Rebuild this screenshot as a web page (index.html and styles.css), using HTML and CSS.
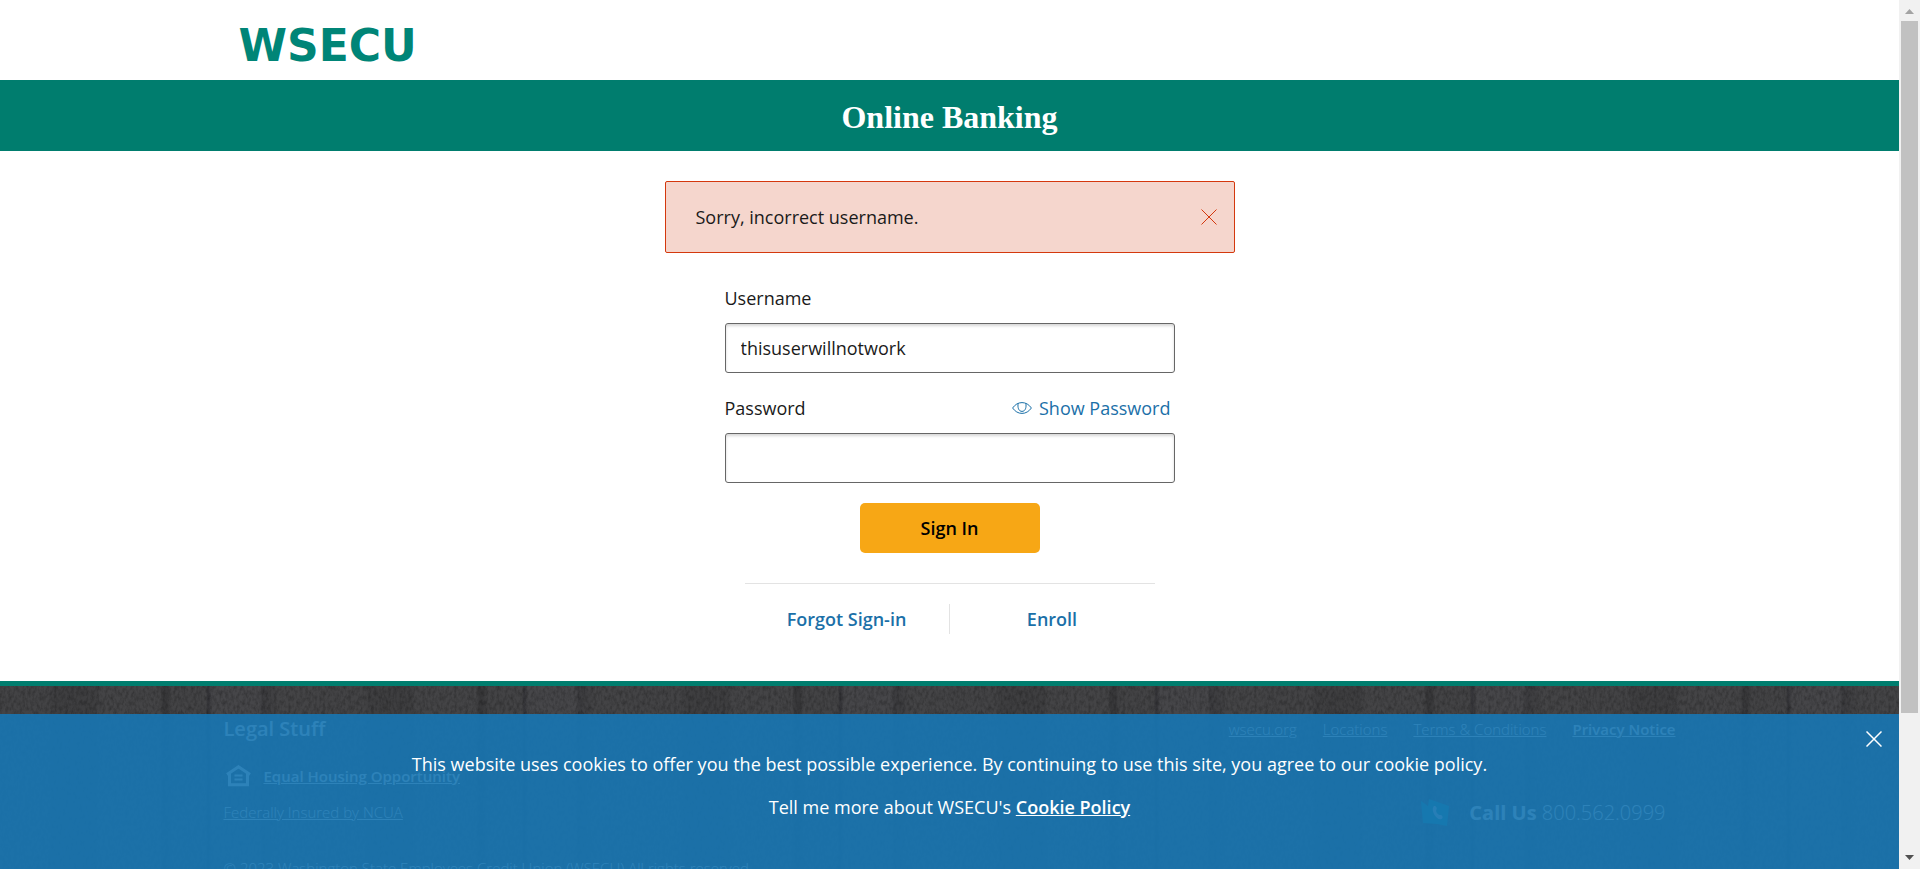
FILE: index.html
```html
<!DOCTYPE html>
<html lang="en">
<head>
<meta charset="utf-8">
<title>Online Banking</title>
<link rel="stylesheet" href="styles.css">
</head>
<body>
<div class="frame">
  <div class="page">
    <header class="site-header"><a class="logo" href="#">WSECU</a></header>
    <div class="banner"><h1>Online Banking</h1></div>
    <main class="content">
      <div class="alert" role="alert">
        <p>Sorry, incorrect username.</p>
        <button class="alert-close" type="button" aria-label="Dismiss"><svg width="16" height="16" viewBox="0 0 16 16"><path d="M.5.5l15 15M15.5.5l-15 15"/></svg></button>
      </div>
      <form class="login">
        <div class="field">
          <label for="username">Username</label>
          <input id="username" type="text" value="thisuserwillnotwork">
        </div>
        <div class="field">
          <div class="label-row">
            <label for="password">Password</label>
            <button class="show-password" type="button"><svg width="20" height="12" viewBox="0 0 20 12"><path d="M.6 6C3 2.600 6.200.6 10 .6S17 2.600 19.400 6C17 9.400 13.800 11.400 10 11.400S3 9.400.6 6z"/><path d="M6.200 1.400C5.400 5 6.500 9.400 10 9.400s4.600-4.400 3.800-8"/></svg>Show Password</button>
          </div>
          <input id="password" type="password">
        </div>
        <button class="submit" type="submit">Sign In</button>
        <nav class="form-links">
          <a href="#">Forgot Sign-in</a>
          <a href="#">Enroll</a>
        </nav>
      </form>
    </main>
    <footer class="site-footer">
      <div class="footer-inner">
        <section class="legal">
          <h2>Legal Stuff</h2>
          <p class="housing"><svg width="25" height="22" viewBox="0 0 25 22"><path d="M1 9.500L12.500 1.800 24 9.500M3.500 8.500v11.200h18V8.500" fill="none" stroke="#fff" stroke-width="3"/><path d="M8.500 10.500h8M8.500 14.500h8" stroke="#fff" stroke-width="2"/></svg><a href="#">Equal Housing Opportunity</a></p>
          <p><a href="#">Federally Insured by NCUA</a></p>
          <p class="copyright">© 2023 Washington State Employees Credit Union (WSECU) All rights reserved.</p>
        </section>
        <section class="contact">
          <nav class="footer-links">
            <a href="#">wsecu.org</a>
            <a href="#">Locations</a>
            <a href="#">Terms &amp; Conditions</a>
            <a class="strong" href="#">Privacy Notice</a>
          </nav>
          <p class="call"><svg width="28" height="28" viewBox="0 0 28 28"><path d="M0 2l7 5 1-7 20 7-2 20-10-2-14-1z" fill="#008f90"/><path d="M12.500 7.500c2-1.500 4 1.500 3 3-1.200 1.500.8 5 3.500 5.500 2-.5 4 2.500 1.500 4-4.500 2-11-8-8-12.500z" fill="#bcd"/></svg><span><strong>Call Us</strong> 800.562.0999</span></p>
        </section>
      </div>
    </footer>
  </div>
  <div class="cookie-bar" role="region" aria-label="Cookie notice">
    <p>This website uses cookies to offer you the best possible experience. By continuing to use this site, you agree to our cookie policy.</p>
    <p>Tell me more about WSECU's <a href="#">Cookie Policy</a></p>
    <button class="cookie-close" type="button" aria-label="Close"><svg width="16" height="16" viewBox="0 0 16 16"><path d="M.5.5l15 15M15.500.5l-15 15"/></svg></button>
  </div>
  <div class="scrollbar" aria-hidden="true">
    <svg width="9" height="5" viewBox="0 0 9 5"><path d="M0 5L4.500 0 9 5z" fill="#a3a3a3"/></svg>
    <div class="track"><div class="thumb"></div></div>
    <svg width="9" height="5" viewBox="0 0 9 5"><path d="M0 0h9L4.500 5z" fill="#505050"/></svg>
  </div>
</div>
</body>
</html>
```
FILE: styles.css
```css
* { box-sizing: border-box; }

body {
  margin: 0;
  background: #fff;
  color: #1a1a1a;
  font: 18px/24px "Open Sans", sans-serif;
}

h1, h2, p { margin: 0; }

button {
  padding: 0;
  border: 0;
  background: none;
  font: inherit;
  cursor: pointer;
}

.frame {
  position: relative;
  display: grid;
  grid-template-columns: minmax(0, 1fr) 21px;
  height: 100vh;
}

.page {
  overflow-y: auto;
  scrollbar-width: none;
}

.site-header {
  display: flex;
  align-items: center;
  max-width: 1452px;
  height: 80px;
  margin: 0 auto;
  padding: 12px 15px 0;
}

.logo {
  color: #008577;
  font: bold 44px/48px "DejaVu Sans", sans-serif;
  text-decoration: none;
}

.banner {
  padding: 17px 0 14px;
  background: #007d6e;
  color: #fff;
  text-align: center;
}

.banner h1 { font: bold 32px/40px "Liberation Serif", serif; }

.content {
  display: flex;
  flex-direction: column;
  align-items: center;
  padding: 30px 0 47px;
}

.alert {
  display: flex;
  align-items: center;
  justify-content: space-between;
  width: 570px;
  max-width: 100%;
  padding: 23px 17px 23px 30px;
  border: 1px solid #d4380d;
  border-radius: 2px;
  background: #f5d6cd;
}

.alert-close { display: flex; }

.alert-close svg,
.show-password svg {
  fill: none;
  stroke: #d4380d;
}

.login {
  display: flex;
  flex-direction: column;
  align-items: center;
  width: 450px;
  max-width: 100%;
  margin-top: 33px;
}

.field {
  display: flex;
  flex-direction: column;
  gap: 13px;
  width: 100%;
  margin-bottom: 23px;
}

.field + .field { margin-bottom: 20px; }

.label-row {
  display: flex;
  justify-content: space-between;
  padding-right: 4px;
}

.show-password {
  display: flex;
  align-items: center;
  gap: 7px;
  color: #1b70a8;
}

.show-password svg { stroke: #1b70a8; }

.field input {
  width: 100%;
  height: 50px;
  padding: 0 15px;
  border: 1px solid #666;
  border-radius: 3px;
  background: #fff;
  box-shadow: inset 0 2px 3px rgba(0, 0, 0, .16);
  color: inherit;
  font: inherit;
}

.submit {
  width: 180px;
  height: 50px;
  border-radius: 5px;
  background: #f7a715;
  color: #000;
  font-weight: 600;
}

.form-links {
  display: grid;
  grid-template-columns: 1fr 1fr;
  width: 410px;
  max-width: 100%;
  margin-top: 30px;
  padding-top: 20px;
  border-top: 1px solid #e3e3e3;
}

.form-links a {
  color: #1b70a8;
  font-weight: 600;
  line-height: 30px;
  text-align: center;
  text-decoration: none;
}

.form-links a:first-child { border-right: 1px solid #e3e3e3; }

.site-footer {
  border-top: 5px solid #007d6e;
  background:
    url("data:image/svg+xml,%3Csvg xmlns='http://www.w3.org/2000/svg' width='400' height='200'%3E%3Cfilter id='n' x='0' y='0' width='100%25' height='100%25'%3E%3CfeTurbulence type='fractalNoise' baseFrequency='.35 .2' numOctaves='3' stitchTiles='stitch'/%3E%3CfeColorMatrix values='0 0 0 0 0 0 0 0 0 0 0 0 0 0 0 .5 0 0 0 -.18'/%3E%3C/filter%3E%3Crect width='400' height='200' filter='url(%23n)'/%3E%3C/svg%3E"),
    repeating-linear-gradient(90deg, #434345 0 48px, #3e3e40 52px 96px, #444446 100px 160px, #38383a 163px 167px, #434345 172px 206px, #323236 208px, #464649 212px 260px, #3b3b3e 262px, #444446 280px 316px);
  color: #fff;
  font-size: 15px;
  font-weight: 300;
}

.footer-inner {
  display: flex;
  justify-content: space-between;
  max-width: 1452px;
  margin: 0 auto;
  padding: 31px 0 80px;
}

.site-footer a { color: #fff; }

.legal h2 {
  font-size: 20px;
  font-weight: 600;
  line-height: 24px;
}

.housing {
  display: flex;
  align-items: center;
  gap: 13px;
  margin: 23px 0 12px;
  padding-left: 2px;
  font-weight: 600;
}

.copyright { margin-top: 32px; }

.contact {
  display: flex;
  flex-direction: column;
  gap: 58px;
}

.footer-links {
  display: flex;
  gap: 26px;
}

.footer-links .strong { font-weight: 600; }

.call {
  display: flex;
  align-items: center;
  align-self: flex-end;
  gap: 20px;
  padding-right: 10px;
  font-size: 20px;
}

.call strong { font-weight: 700; }

.cookie-bar {
  position: absolute;
  right: 21px;
  bottom: 0;
  left: 0;
  padding: 38px 60px 50px;
  background: rgba(24, 118, 178, .91);
  color: #fff;
  text-align: center;
}

.cookie-bar p + p { margin-top: 19px; }

.cookie-bar a {
  color: #fff;
  font-weight: 600;
}

.cookie-close {
  position: absolute;
  top: 17px;
  right: 17px;
  display: flex;
}

.cookie-close svg {
  fill: none;
  stroke: #fff;
  stroke-width: 1.5;
}

.scrollbar {
  display: grid;
  grid-template-rows: auto 1fr auto;
  justify-items: center;
  gap: 7px;
  padding: 9px 2px;
  background: #f1f1f1;
}

.track { width: 100%; }

.thumb {
  height: 83.7%;
  background: #c1c1c1;
}
```
